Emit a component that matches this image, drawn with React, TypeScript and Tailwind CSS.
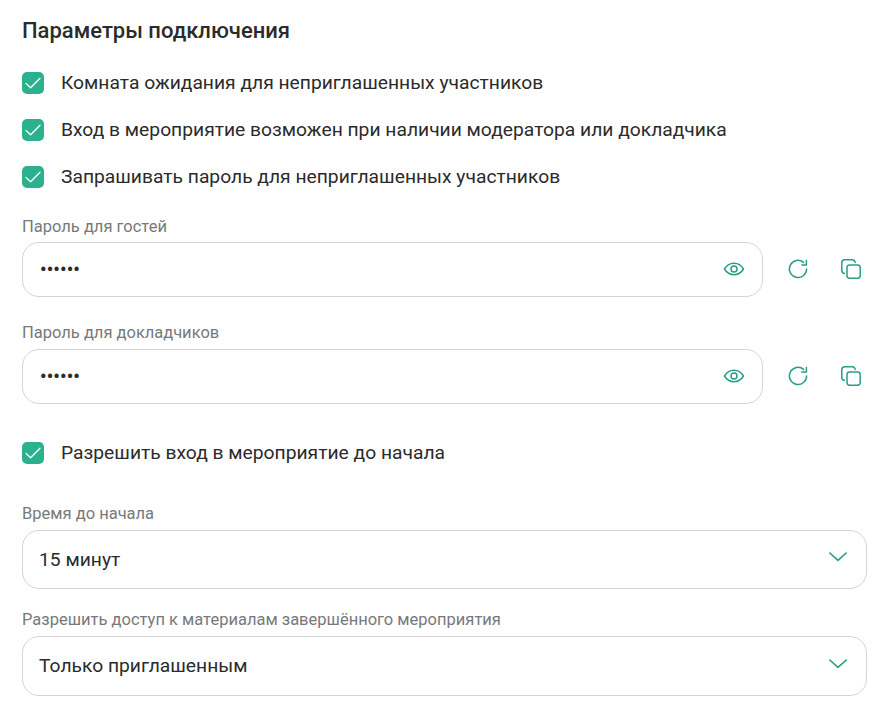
import React from "react";

const G = "#2a9d84";

function Check({ label, className = "" }: { label: string; className?: string }) {
  return (
    <div className={`flex items-center gap-[17px] h-[22px] ${className}`}>
      <div className="w-[22px] h-[22px] rounded-[5px] bg-[#2cb18f] flex items-center justify-center">
        <svg width="16" height="16" viewBox="0 0 16 16" fill="none">
          <path d="M1 8.4 L5.6 12.8 L15 3.2" stroke="#fff" strokeWidth="1.3" strokeLinecap="round" strokeLinejoin="round" />
        </svg>
      </div>
      <span className="text-[19.25px] leading-[22px] text-[#2b2b2b]">{label}</span>
    </div>
  );
}

function Eye() {
  return (
    <svg width="22" height="22" viewBox="0 0 22 22" fill="none" stroke={G} strokeWidth="1.5">
      <path d="M1.5 11 C4 6.8 7.2 5.2 11 5.2 C14.8 5.2 18 6.8 20.5 11 C18 15.2 14.8 16.8 11 16.8 C7.2 16.8 4 15.2 1.5 11 Z" />
      <circle cx="11" cy="11" r="3" />
    </svg>
  );
}

function Refresh() {
  return (
    <svg width="22" height="22" viewBox="0 0 22 22" fill="none" stroke={G} strokeWidth="1.5" strokeLinecap="round" strokeLinejoin="round">
      <path d="M19.6 11 A8.6 8.6 0 1 1 16.6 4.4" />
      <path d="M19.4 2.4 V7 H14.8" />
    </svg>
  );
}

function Copy() {
  return (
    <svg width="20" height="20" viewBox="0 0 20 20" fill="none" stroke={G} strokeWidth="1.5" strokeLinecap="round" strokeLinejoin="round">
      <rect x="6" y="6" width="13.2" height="13.2" rx="2.6" />
      <path d="M3.4 14.4 C1.8 14 0.8 13 0.8 11.4 V3.8 C0.8 2 2 0.8 3.8 0.8 H11.2 C12.8 0.8 13.8 1.8 14.2 3.4" />
    </svg>
  );
}

function Chevron() {
  return (
    <svg width="20" height="12" viewBox="0 0 20 12" fill="none" stroke={G} strokeWidth="1.6" strokeLinecap="round" strokeLinejoin="round">
      <path d="M1.8 2 L10 9.4 L18.2 2" />
    </svg>
  );
}

function Password({ label, className = "", fieldClass = "" }: { label: string; className?: string; fieldClass?: string }) {
  return (
    <div className={className}>
      <div className="text-[16.5px] leading-[18px] text-[#77797c]">{label}</div>
      <div className={`flex items-center ${fieldClass}`}>
        <div className="w-[741px] h-[54.5px] rounded-[17px] border border-[#d4d4d4] flex items-center justify-between pl-[17px] pr-[17px]">
          <span className="text-[18px] leading-[22px] text-[#2b2b2b] font-bold tracking-[0.2px] mt-[1px]">••••••</span>
          <Eye />
        </div>
        <div className="ml-[24px] flex items-center gap-[32px]">
          <Refresh />
          <Copy />
        </div>
      </div>
    </div>
  );
}

function Select({ label, value, className = "", fieldClass = "" }: { label: string; value: string; className?: string; fieldClass?: string }) {
  return (
    <div className={className}>
      <div className="text-[16.5px] leading-[18px] text-[#77797c]">{label}</div>
      <div className={`w-[845px] mt-[7px] rounded-[17px] border border-[#d4d4d4] flex items-center justify-between pl-[16px] pr-[18px] ${fieldClass}`}>
        <span className="text-[19.25px] leading-[22px] text-[#2b2b2b]">{value}</span>
        <div className="mb-[5px] flex"><Chevron /></div>
      </div>
    </div>
  );
}

export default function App() {
  return (
    <div className="min-h-[719px] bg-white pl-[22px] pt-[18px] font-['Roboto',sans-serif]">
      <h2 className="text-[22px] leading-[26px] font-medium text-[#2b2b2b]">Параметры подключения</h2>
      <Check className="mt-[28px]" label="Комната ожидания для неприглашенных участников" />
      <Check className="mt-[25px]" label="Вход в мероприятие возможен при наличии модератора или докладчика" />
      <Check className="mt-[25px]" label="Запрашивать пароль для неприглашенных участников" />
      <Password className="mt-[30px]" fieldClass="mt-[6px]" label="Пароль для гостей" />
      <Password className="mt-[27.5px]" fieldClass="mt-[7px]" label="Пароль для докладчиков" />
      <Check className="mt-[38.5px]" label="Разрешить вход в мероприятие до начала" />
      <Select className="mt-[41px]" fieldClass="h-[59px]" label="Время до начала" value="15 минут" />
      <Select className="mt-[22px]" fieldClass="h-[60px]" label="Разрешить доступ к материалам завершённого мероприятия" value="Только приглашенным" />
    </div>
  );
}
